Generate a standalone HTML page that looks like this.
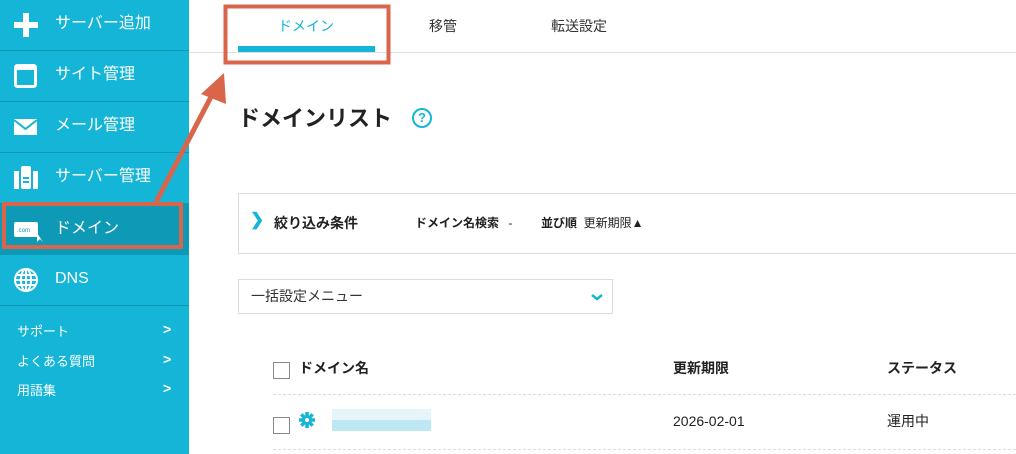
<!DOCTYPE html>
<html><head><meta charset="utf-8"><style>
*{margin:0;padding:0;box-sizing:border-box}
body{width:1016px;height:454px;overflow:hidden;background:#fff;font-family:"Liberation Sans","Noto Sans CJK JP",sans-serif;color:#222;position:relative}
#side{position:absolute;left:0;top:0;width:189px;height:454px;background:#14b5d6}
.it{position:absolute;left:0;width:189px;height:51px;border-bottom:1px solid #0f98b4;color:#fff;font-size:16px}
.it span{position:absolute;left:55px;top:9px}
.it svg{position:absolute;left:13px;top:12px}
.sm{position:absolute;left:17px;color:#fff;font-size:13px}
.sm b{position:absolute;left:146px;top:0;font-weight:bold;font-size:14px}
.abs{position:absolute}
</style></head><body>
<div id="side">
 <div class="it" style="top:0"><svg width="26" height="26"><rect x="10" y="1" width="6" height="24" fill="#fff"/><rect x="1" y="10" width="24" height="6" fill="#fff"/></svg><span>サーバー追加</span></div>
 <div class="it" style="top:51px"><svg width="26" height="26"><rect x="2.5" y="2.5" width="20" height="21" rx="2" fill="none" stroke="#fff" stroke-width="3"/><rect x="2" y="2" width="21" height="5" fill="#fff"/></svg><span>サイト管理</span></div>
 <div class="it" style="top:102px"><svg width="26" height="26"><rect x="1" y="5" width="23" height="16" fill="#fff"/><path d="M1 6 L12.5 15 L24 6" fill="none" stroke="#14b5d6" stroke-width="2"/></svg><span>メール管理</span></div>
 <div class="it" style="top:153px"><svg width="26" height="26"><rect x="1" y="6" width="5" height="18" fill="#fff"/><rect x="8" y="1" width="10" height="23" rx="2" fill="#fff"/><rect x="20" y="6" width="5" height="18" fill="#fff"/><rect x="10" y="12" width="6" height="2" fill="#14b5d6"/><rect x="10" y="16" width="6" height="2" fill="#14b5d6"/></svg><span>サーバー管理</span></div>
 <div class="it" style="top:204px;background:#0e9ab6"><svg width="30" height="26"><rect x="1" y="6" width="24" height="15" rx="2" fill="#fff"/><text x="4" y="16" font-size="6" fill="#0e9ab6" font-family="Liberation Sans">.com</text><path d="M24 17 L24 26 L27 23 L30 26" fill="#fff"/></svg><span style="top:10px">ドメイン</span></div>
 <div class="it" style="top:255px"><svg width="26" height="26"><g fill="none" stroke="#fff" stroke-width="2"><circle cx="13" cy="13" r="11"/><ellipse cx="13" cy="13" rx="5" ry="11"/><path d="M2 13H24M4 8H22M4 18H22M13 2V24"/></g></svg><span style="top:15px">DNS</span></div>
 <div class="sm" style="top:321px">サポート<b>&gt;</b></div>
 <div class="sm" style="top:351px">よくある質問<b>&gt;</b></div>
 <div class="sm" style="top:380px">用語集<b>&gt;</b></div>
</div>
<div class="abs" style="left:189px;top:52px;width:827px;border-top:1px solid #ddd"></div>
<div class="abs" style="left:278px;top:16px;font-size:14px;color:#14b5d6">ドメイン</div>
<div class="abs" style="left:238px;top:46px;width:137px;height:6px;background:#14b5d6"></div>
<div class="abs" style="left:429px;top:16px;font-size:14px;color:#333">移管</div>
<div class="abs" style="left:551px;top:16px;font-size:14px;color:#333">転送設定</div>
<div class="abs" style="left:238px;top:101px;font-size:22px;font-weight:bold;color:#222">ドメインリスト</div>
<div class="abs" style="left:412px;top:108px;width:20px;height:20px;border:2px solid #14b5d6;border-radius:50%;color:#14b5d6;font-size:13px;font-weight:bold;text-align:center;line-height:16px">?</div>
<div class="abs" style="left:238px;top:193px;width:790px;height:61px;border:1px solid #ddd"></div>
<div class="abs" style="left:250px;top:210px;font-size:17px;font-weight:bold;color:#14b5d6">&#x276F;</div>
<div class="abs" style="left:274px;top:213px;font-size:14px;font-weight:bold">絞り込み条件</div>
<div class="abs" style="left:415px;top:214px;font-size:12px;font-weight:bold">ドメイン名検索 <span style="font-weight:normal;margin-left:6px">-</span></div>
<div class="abs" style="left:541px;top:214px;font-size:12px;"><b>並び順</b>&nbsp; 更新期限▲</div>
<div class="abs" style="left:238px;top:279px;width:375px;height:35px;border:1px solid #ddd"></div>
<div class="abs" style="left:251px;top:286px;font-size:14px;color:#333">一括設定メニュー</div>
<svg class="abs" style="left:591px;top:293px" width="12" height="8"><path d="M1 2 L6 6 L11 2" fill="none" stroke="#14b5d6" stroke-width="2.5"/></svg>
<div class="abs" style="left:273px;top:362px;width:17px;height:17px;border:1px solid #888"></div>
<div class="abs" style="left:299px;top:358px;font-size:14px;font-weight:bold">ドメイン名</div>
<div class="abs" style="left:673px;top:358px;font-size:14px;font-weight:bold">更新期限</div>
<div class="abs" style="left:887px;top:358px;font-size:14px;font-weight:bold">ステータス</div>
<div class="abs" style="left:273px;top:394px;width:743px;border-top:1px dashed #ddd"></div>
<div class="abs" style="left:273px;top:417px;width:17px;height:17px;border:1px solid #888"></div>
<svg class="abs" style="left:298px;top:411px" width="18" height="18"><g stroke="#14b5d6" stroke-width="3.5"><path d="M9 1V17M1 9H17M3.3 3.3L14.7 14.7M14.7 3.3L3.3 14.7"/></g><circle cx="9" cy="9" r="5" fill="#14b5d6"/><circle cx="9" cy="9" r="2" fill="#fff"/></svg>
<div class="abs" style="left:332px;top:409px;width:99px;height:11px;background:#e6f5fa"></div>
<div class="abs" style="left:332px;top:420px;width:99px;height:11px;background:#bde7f2"></div>
<div class="abs" style="left:673px;top:413px;font-size:14px">2026-02-01</div>
<div class="abs" style="left:887px;top:411px;font-size:14px">運用中</div>
<div class="abs" style="left:273px;top:449px;width:743px;border-top:1px dashed #ddd"></div>
<svg class="abs" style="left:0;top:0" width="1016" height="454">
 <rect x="225.5" y="6.5" width="163" height="56" fill="none" stroke="#d9654a" stroke-width="4"/>
 <rect x="4" y="204" width="177" height="43" fill="none" stroke="#d9654a" stroke-width="4"/>
 <line x1="156" y1="202" x2="212" y2="95" stroke="#d9654a" stroke-width="5"/>
 <polygon points="224,73 226,104 201,94" fill="#d9654a"/>
</svg>
</body></html>
